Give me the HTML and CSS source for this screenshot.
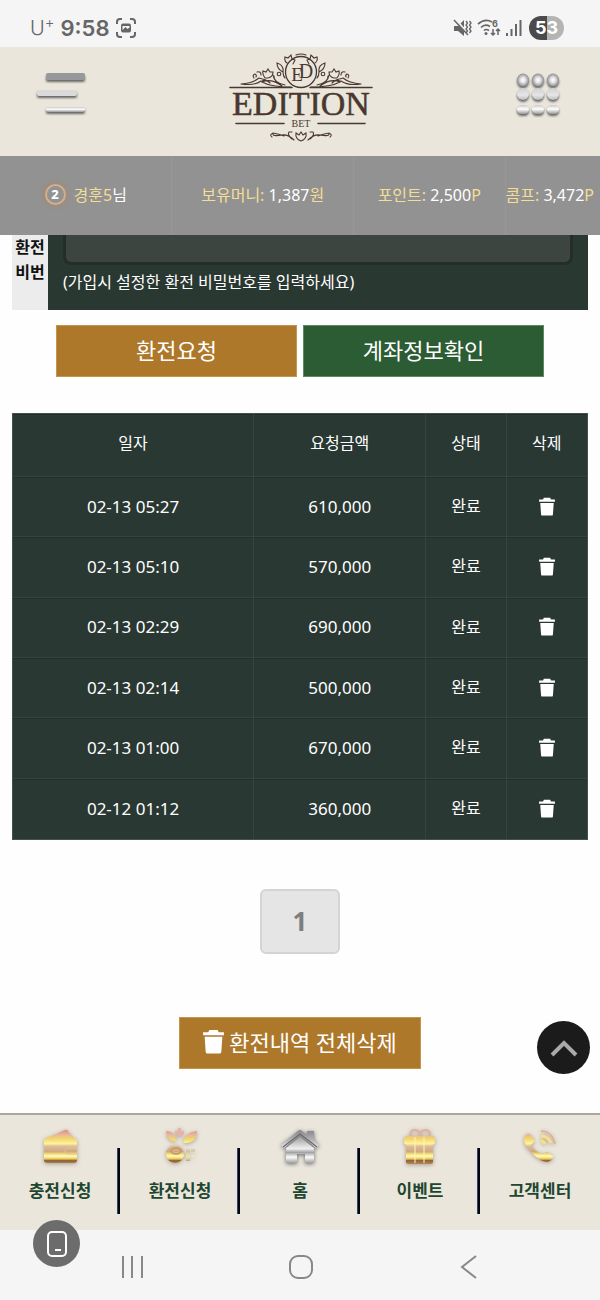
FILE: index.html
```html
<!DOCTYPE html>
<html lang="ko">
<head>
<meta charset="utf-8">
<meta name="viewport" content="width=device-width, initial-scale=1">
<title>EDITION BET</title>
<link rel="stylesheet" href="styles.css">
</head>
<body>
<svg class="defs" aria-hidden="true">
  <defs>
    <linearGradient id="gold" x1="0" y1="4" x2="0" y2="38" gradientUnits="userSpaceOnUse">
      <stop offset="0" stop-color="#e08d80"/><stop offset=".14" stop-color="#e9b69d"/>
      <stop offset=".26" stop-color="#f0d868"/><stop offset=".4" stop-color="#fff2a0"/>
      <stop offset=".48" stop-color="#dcbd96"/><stop offset=".64" stop-color="#cfa880"/>
      <stop offset=".7" stop-color="#f3dd70"/><stop offset=".77" stop-color="#fffbc4"/>
      <stop offset=".85" stop-color="#ecca50"/><stop offset=".9" stop-color="#8e6038"/>
      <stop offset="1" stop-color="#b08a64"/>
    </linearGradient>
    <linearGradient id="silver" x1="0" y1="4" x2="0" y2="38" gradientUnits="userSpaceOnUse">
      <stop offset="0" stop-color="#85858a"/><stop offset=".3" stop-color="#b4b4b6"/>
      <stop offset=".55" stop-color="#f0f0f0"/><stop offset=".66" stop-color="#a2a2a5"/>
      <stop offset=".8" stop-color="#fbfbfb"/><stop offset="1" stop-color="#8f8f8f"/>
    </linearGradient>
    <radialGradient id="ball"><stop offset="0" stop-color="#fff"/><stop offset=".4" stop-color="#e6e6e7"/><stop offset="1" stop-color="#8d8d92"/></radialGradient>
    <linearGradient id="pearl" x1="0" y1="0" x2="0" y2="1"><stop offset="0" stop-color="#d0d0d1"/><stop offset=".6" stop-color="#e6e6e6"/><stop offset="1" stop-color="#bbb"/></linearGradient>
    <linearGradient id="pill" x1="0" y1="0" x2="0" y2="1"><stop offset="0" stop-color="#c9c9c9"/><stop offset=".45" stop-color="#fff"/><stop offset="1" stop-color="#9a9a9a"/></linearGradient>
    <symbol id="trash" viewBox="0 0 20 24"><path d="M6 1h8l1 2h5v3H0V3h5zM1.500 7.500h17L17.500 22q-.2 1.500-1.700 1.500H4.200Q2.700 23.500 2.500 22z"/></symbol>
  </defs>
</svg>
<div class="screen">
  <div class="status">
    <div class="status-side">
      <span class="carrier">U<sup>+</sup></span>
      <span class="clock">9:58</span>
      <svg class="capture" viewBox="0 0 20 20"><path d="M1 6V4q0-3 3-3h2M14 1h2q3 0 3 3v2M19 14v2q0 3-3 3h-2M6 19H4q-3 0-3-3v-2" fill="none" stroke="#666" stroke-width="2"/><rect x="5" y="5.500" width="10" height="9" rx="2" fill="#666"/><path d="M6.500 12l3-3 2 2 2-1.500V8h-7z" fill="#f5f5f5"/></svg>
    </div>
    <div class="status-side">
      <svg class="signals" viewBox="0 0 70 20">
        <g fill="#666"><path d="M1 8h4l6-6v16l-6-5H1z"/><path d="M2 1l14 16" stroke="#f5f5f5" stroke-width="2.500"/><path d="M1 2l14 15" stroke="#666" stroke-width="1.500"/></g>
        <g fill="none" stroke="#666" stroke-width="2"><path d="M13 3l1.500 2-1.500 2 1.500 2-1.500 2 1.500 2-1.500 2M16.500 3l1.500 2-1.500 2 1.500 2-1.500 2 1.500 2-1.500 2" stroke-width="1.300"/><path d="M25 6q7-6 14-2M28 9.500q4-4 9-1M31 12.500q2-2 5 0" stroke-width="1.700"/><path d="M40 11v6m-2-2 2 2 2-2M45 17v-6m-2 2 2-2 2 2" stroke-width="1.500"/></g>
        <circle cx="33" cy="15.500" r="1.500" fill="#666"/>
        <text x="39" y="9" font-family="Inter, sans-serif" font-size="9" font-weight="700" fill="#666">6</text>
        <path d="M54 18v-3M58.500 18v-7M63 18V6M67.500 18V2" stroke="#666" stroke-width="2"/>
      </svg>
      <span class="battery">53</span>
    </div>
  </div>

  <header class="header">
    <button class="icon-btn" aria-label="메뉴">
      <svg class="menu-icon" viewBox="0 0 54 48"><g class="soft"><rect x="12" y="2" width="39" height="7" rx="2" fill="#98989c"/><rect x="3" y="19" width="40" height="6" rx="2" fill="#dadadb"/><rect x="12" y="36" width="39" height="5" rx="2" fill="url(#pill)"/></g></svg>
    </button>
    <a class="logo" href="#" aria-label="EDITION BET">
      <svg viewBox="0 -6 144 96">
        <g fill="none" stroke="#4a382e" stroke-width="1.100" stroke-linecap="round">
          <circle cx="72" cy="19" r="15.500" stroke-width="1.300"/><path d="M67 2q5-2 10 0"/>
          <path d="M1 34.500h62M81 34.500h62M7 70.500h48M89 70.500h47" stroke-width="1.600"/>
          <g id="spray">
            <path d="M58 10q-3-2-2-6l3 1 3-3 1 4 3 1-2 4M54 19q-6-3-6-9 7 2 6 9M54 19q0 4 2 6M56 32q-11-2-12-10M52 31q-7-2-7-8M62 34q-20 0-29-5 9-4 20 4M33 28q4-2 8 2M36 25q-3-4-2-7l3 1 2-3 2 3 3 0q0 5-5 6zM12 31q12-1 18-6l7 2M12 31q13 2 20-3"/>
            <circle cx="50" cy="21" r="1.800"/><path d="M25 25q-2-3 1-4 2 1 1 3M28 19q4-1 4 3"/>
          </g>
          <use href="#spray" transform="matrix(-1 0 0 1 144 0)"/>
          <path d="M67 80q-1 6 5 8 6-2 5-8l-3 2-2-3-2 3zM65 87q-6-6-12-5-10 2-9-2M43 84q-3-2 1-4 6 1 11 3M63 86q-5-4-3-7h3M79 87q6-6 12-5 10 2 9-2M101 84q3-2-1-4-6 1-11 3M81 86q5-4 3-7h-3"/>
        </g>
        <g fill="#4a382e" font-family="'Liberation Serif', serif" text-anchor="middle">
          <text x="68" y="28" font-size="19">E</text><text x="77" y="25" font-size="20">D</text>
          <text class="wordmark" x="72" y="62" font-size="34">EDITION</text>
          <text x="72" y="74" font-size="10">BET</text>
        </g>
      </svg>
    </a>
    <button class="icon-btn" aria-label="전체 메뉴">
      <svg class="grid-icon" viewBox="0 0 50 46"><g class="soft"><ellipse cx="9" cy="8" rx="6" ry="6.500" fill="url(#ball)"/><ellipse cx="24" cy="8" rx="6" ry="6.500" fill="url(#ball)"/><ellipse cx="39" cy="8" rx="6" ry="6.500" fill="url(#ball)"/><circle cx="9" cy="22" r="6" fill="url(#pearl)"/><circle cx="24" cy="22" r="6" fill="url(#pearl)"/><circle cx="39" cy="22" r="6" fill="url(#pearl)"/><rect x="3" y="33" width="12" height="9" rx="4.500" fill="url(#pill)"/><rect x="18" y="33" width="12" height="9" rx="4.500" fill="url(#pill)"/><rect x="33" y="33" width="12" height="9" rx="4.500" fill="url(#pill)"/></g></svg>
    </button>
  </header>

  <div class="balance">
    <div class="stat user"><span class="level">2</span><span><b>경훈5</b>님</span></div>
    <div class="stat"><span><b>보유머니:</b> 1,387<b>원</b></span></div>
    <div class="stat"><span><b>포인트:</b> 2,500<b>P</b></span></div>
    <div class="stat last"><span><b>콤프:</b> 3,472<b>P</b></span></div>
  </div>

  <main class="content">
    <form class="pin">
      <label class="pin-label" for="pin">환전 비번</label>
      <div class="pin-body">
        <input class="pin-input" id="pin" type="password">
        <p class="hint">(가입시 설정한 환전 비밀번호를 입력하세요)</p>
      </div>
    </form>
    <div class="actions">
      <button class="btn gold">환전요청</button>
      <button class="btn green">계좌정보확인</button>
    </div>
    <table class="history">
      <colgroup><col class="c-date"><col class="c-amount"><col class="c-state"><col class="c-del"></colgroup>
      <thead><tr><th>일자</th><th>요청금액</th><th>상태</th><th>삭제</th></tr></thead>
      <tbody>
        <tr><td>02-13 05:27</td><td>610,000</td><td class="ko">완료</td><td><button class="del" aria-label="삭제"><svg><use href="#trash"/></svg></button></td></tr>
        <tr><td>02-13 05:10</td><td>570,000</td><td class="ko">완료</td><td><button class="del" aria-label="삭제"><svg><use href="#trash"/></svg></button></td></tr>
        <tr><td>02-13 02:29</td><td>690,000</td><td class="ko">완료</td><td><button class="del" aria-label="삭제"><svg><use href="#trash"/></svg></button></td></tr>
        <tr><td>02-13 02:14</td><td>500,000</td><td class="ko">완료</td><td><button class="del" aria-label="삭제"><svg><use href="#trash"/></svg></button></td></tr>
        <tr><td>02-13 01:00</td><td>670,000</td><td class="ko">완료</td><td><button class="del" aria-label="삭제"><svg><use href="#trash"/></svg></button></td></tr>
        <tr><td>02-12 01:12</td><td>360,000</td><td class="ko">완료</td><td><button class="del" aria-label="삭제"><svg><use href="#trash"/></svg></button></td></tr>
      </tbody>
    </table>
    <nav class="pager"><a class="page" href="#">1</a></nav>
    <button class="btn gold clear"><svg><use href="#trash"/></svg>환전내역 전체삭제</button>
    <button class="to-top" aria-label="맨 위로"><svg viewBox="0 0 28 18"><path d="M2 16 14 4l12 12" fill="none" stroke="#aaa" stroke-width="4"/></svg></button>
  </main>

  <nav class="tabs">
    <a class="tab" href="#"><svg viewBox="0 0 44 42"><g fill="url(#gold)"><path d="M9 12 27 4q2-1 3 1l6 8z"/><path d="M9 12h26q4 0 4 4v18q0 3-3 3H9q-3 0-3-3V15q0-3 3-3z"/></g><path d="M39 22h-9q-3 0-3 3t3 3h9" fill="none" stroke="#e1c391"/></svg>충전신청</a>
    <a class="tab" href="#"><svg viewBox="0 0 44 42"><path d="M20 2h3v3h3v3h-3v3h-3V8h-3V5h3z" fill="#e9b2a6"/><g fill="url(#gold)"><path d="M8 5q9 0 10 10-9 1-10-10zM39 5q-12 1-14 12 14 1 14-12z"/><circle cx="17" cy="28" r="9"/><path d="M28 23h4v12h-4zM33 23h4v3h-4zM33 28h4v3h-4z" opacity=".4"/></g><ellipse cx="18" cy="25" rx="5" ry="3" fill="none" stroke="#c39366" stroke-width="1.500"/></svg>환전신청</a>
    <a class="tab" href="#"><svg class="home" viewBox="0 0 44 42"><g fill="url(#silver)"><path d="M20 5q2-2 4 0l5 4V5h7v9l5 5-3 3-16-13L6 22l-3-3z"/><path d="M22 11 36 22v13q0 2-2 2h-7v-9h-8v9h-8q-3 0-3-2V22z"/></g><path d="M5 21 22 8l17 13" fill="none" stroke="#68686c" stroke-width="1.300"/></svg>홈</a>
    <a class="tab" href="#"><svg viewBox="0 0 44 42"><path d="M13 11q-2-7 4-7 5 0 5 6 0-6 6-6 6 1 3 7" fill="none" stroke="#e2b09e" stroke-width="2"/><g fill="url(#gold)"><rect x="6" y="10" width="31" height="9" rx="3"/><path d="M8 19h27v17q0 2-2 2H10q-2 0-2-2z"/></g><path d="M17 11v26M26 11v26" stroke="#fff2b4" stroke-opacity=".7" stroke-width="1.500"/></svg>이벤트</a>
    <a class="tab" href="#"><svg viewBox="0 0 44 42"><path d="M6 11q4-6 7-2l4 6-4 4q4 7 12 9l4-2 6 4q1 3-5 6-8 0-17-10Q5 19 6 11z" fill="url(#gold)"/><path d="M23 5q11 0 14 13" fill="none" stroke="#e2ad96" stroke-width="1.500"/><path d="M23 10q7 0 10 7M23 15q3 0 4 3" fill="none" stroke="#f5e284" stroke-width="3"/></svg>고객센터</a>
  </nav>

  <div class="system">
    <button class="assist" aria-label="휴대전화"><svg viewBox="0 0 20 26"><rect x="1" y="1" width="18" height="24" rx="4" fill="none" stroke="#fff" stroke-width="2"/><path d="M8 19h6" stroke="#fff" stroke-width="2"/></svg></button>
    <button class="sys-btn" aria-label="최근 앱"><svg viewBox="0 0 26 26"><path d="M3 2v22M12 2v22M22 2v22"/></svg></button>
    <button class="sys-btn" aria-label="홈 화면"><svg viewBox="0 0 26 26"><rect x="2" y="2" width="22" height="22" rx="8"/></svg></button>
    <button class="sys-btn" aria-label="뒤로"><svg viewBox="0 0 26 26"><path d="M20 2 6 13l14 11"/></svg></button>
  </div>
</div>
</body>
</html>
```
FILE: styles.css
```css
* { box-sizing: border-box; }

body {
  margin: 0;
  background: #fefefe;
  color: #fff;
  font-family: "Noto Sans", "Noto Sans CJK KR", sans-serif;
}

button {
  border: 0;
  padding: 0;
  background: none;
  color: inherit;
  font-family: inherit;
}

a { color: inherit; text-decoration: none; }
svg { display: block; flex: none; }
.defs { position: absolute; width: 0; height: 0; }

.screen { display: flex; flex-direction: column; min-height: 100vh; }

.status {
  display: flex;
  justify-content: space-between;
  height: 47px;
  padding: 9px 36px 0 30px;
  background: #f5f5f5;
  color: #666;
  font-family: Inter, sans-serif;
}
.status-side { display: flex; align-items: center; gap: 6px; }
.carrier { font-size: 20px; font-weight: 300; line-height: 24px; }
.carrier sup { font-size: 15px; line-height: 0; vertical-align: 7px; }
.clock { font-size: 22px; font-weight: 600; }
.capture { width: 20px; height: 20px; }
.signals { width: 70px; height: 20px; }
.battery {
  width: 35px;
  border-radius: 12px;
  background: linear-gradient(90deg, #4a4a4a 50%, #b4b4b4 50%);
  color: #fff;
  font-size: 18px;
  font-weight: 700;
  line-height: 24px;
  text-align: center;
}

.header {
  display: flex;
  align-items: center;
  justify-content: space-between;
  height: 109px;
  padding: 0 36px 14px 34px;
  background: #eae6dc;
}
.menu-icon { width: 54px; height: 48px; }
.grid-icon { width: 50px; height: 46px; }
.soft { filter: drop-shadow(0 2px 1px #666); }
.logo svg { width: 144px; height: 96px; }
.wordmark { stroke: #4a382e; stroke-width: 0.5px; }

.balance {
  display: grid;
  grid-template-columns: 172fr 182fr 152fr 94fr;
  height: 79px;
  background: #929292;
  font-size: 16px;
  white-space: nowrap;
}
.stat {
  display: flex;
  align-items: center;
  justify-content: center;
  padding-bottom: 3px;
  border-left: 1px solid #979797;
}
.stat b { color: #f3de96; font-weight: 400; }
.last { padding-right: 6px; }
.user { gap: 8px; border-left: 0; }
.level {
  width: 21px;
  height: 21px;
  border: 2px solid #d2ae8a;
  border-radius: 50%;
  box-shadow: 0 0 4px 2px #a08b78;
  font-size: 13px;
  font-weight: 800;
  line-height: 17px;
  text-align: center;
}

.content {
  position: relative;
  display: flex;
  flex: 1;
  flex-direction: column;
  padding: 0 12px;
}

.pin { display: flex; margin: 0; }
.pin-label {
  width: 36px;
  background: #ececec;
  color: #111;
  font-size: 16px;
  font-weight: 700;
  line-height: 25px;
  text-align: center;
}
.pin-body { flex: 1; padding: 0 15px 15px; background: #2a3832; }
.pin-input {
  display: block;
  width: 100%;
  height: 30px;
  border: 3px solid #252d29;
  border-top: 0;
  border-radius: 0 0 8px 8px;
  background: #3d4541;
  color: #fff;
}
.hint { margin: 5px 0 0; font-size: 16px; line-height: 25px; }

.actions { display: flex; justify-content: center; gap: 6px; margin: 15px 0 36px; padding: 0 44px; }
.btn {
  height: 52px;
  padding-bottom: 4px;
  border: 1px solid;
  font-size: 22px;
}
.actions .btn { flex: 1; }
.gold { border-color: #c3954e; background: #ad782a; }
.green { border-color: #5c8a61; background: #2c5c34; }

.history {
  width: 100%;
  height: 427px;
  border: 1px solid #45524c;
  border-spacing: 0;
  table-layout: fixed;
  background: #2a3833;
  font-size: 17px;
}
.c-date { width: 42%; }
.c-amount { width: 30%; }
.c-state { width: 14%; }
.c-del { width: 14%; }
.history th, .history td {
  height: 60px;
  padding: 0 0 1px;
  border-right: 1px solid #35443e;
  border-bottom: 1px solid #35443e;
  box-shadow: inset 0 1px #232e29;
  text-align: center;
}
.history th { height: 63px; padding-bottom: 6px; font-weight: 400; }
.history th, .history .ko { font-size: 16px; }
.history .ko { padding-bottom: 3px; }
.history th:last-child, .history td:last-child { border-right: 0; }
.history tr:last-child td { border-bottom: 0; }
.del { display: block; margin: 0 auto; }
.del svg { width: 16px; height: 19px; fill: #fff; }

.pager { display: flex; justify-content: center; margin: 49px 0 63px; }
.page {
  width: 80px;
  border: 2px solid #d4d4d4;
  border-radius: 6px;
  background: #e5e5e5;
  color: #7e7e7e;
  font-size: 26px;
  font-weight: 700;
  line-height: 61px;
  text-align: center;
}
.clear {
  display: flex;
  width: 42%;
  align-items: center;
  align-self: center;
  justify-content: center;
  gap: 5px;
}
.clear svg { width: 21px; height: 25px; fill: #fff; }

.to-top {
  position: absolute;
  right: 10px;
  bottom: 39px;
  display: grid;
  width: 53px;
  height: 53px;
  place-items: center;
  border-radius: 50%;
  background: #1b1b1b;
}
.to-top svg { width: 28px; height: 18px; }

.tabs {
  display: grid;
  grid-template-columns: repeat(5, 1fr);
  height: 117px;
  border-top: 2px solid #aaa89c;
  background: #eae6dc;
}
.tab {
  display: flex;
  flex-direction: column;
  align-items: center;
  gap: 10px;
  padding-top: 11px;
  background: linear-gradient(90deg, #35406b 1px, #05050f 1px) right 33px / 3px 66px no-repeat;
  color: #21462f;
  font-size: 17px;
  font-weight: 700;
  line-height: 25px;
}
.tab:last-child { background: none; }
.tab svg { width: 44px; height: 42px; filter: drop-shadow(0 1px 2px #ad9c8b); }
.tab .home { filter: drop-shadow(0 1px 2px #666); }

.system {
  position: relative;
  display: flex;
  align-items: center;
  justify-content: space-between;
  height: 70px;
  padding: 4px 118px 0 120px;
  background: #f5f5f5;
}
.sys-btn svg { width: 26px; height: 26px; fill: none; stroke: #888; stroke-width: 2; }
.assist {
  position: absolute;
  top: -10px;
  left: 33px;
  display: grid;
  width: 47px;
  height: 47px;
  place-items: center;
  border-radius: 50%;
  background: #6c6c6c;
}
.assist svg { width: 20px; height: 26px; }
```
